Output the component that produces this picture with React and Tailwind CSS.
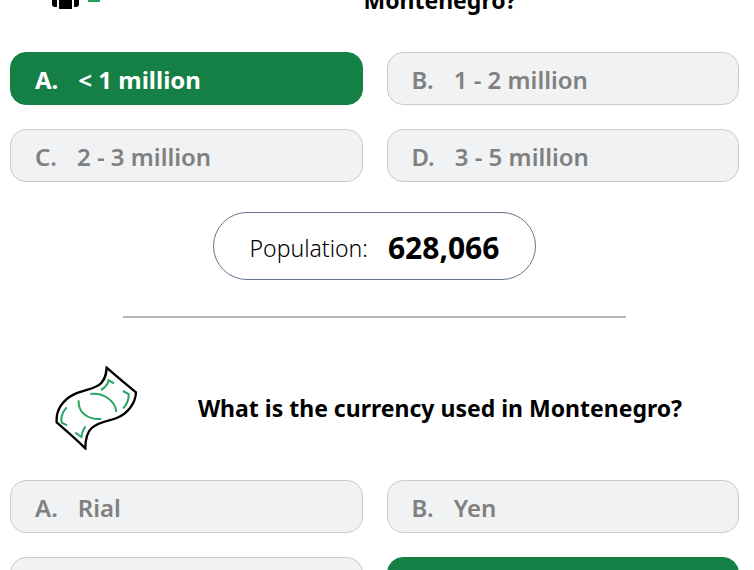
const questions = [
  {
    id: 'population',
    icon: 'people',
    title: 'What is the approximate population of Montenegro?',
    options: ['< 1 million', '1 - 2 million', '2 - 3 million', '3 - 5 million'],
    answer: 0,
  },
  {
    id: 'currency',
    icon: 'money',
    title: 'What is the currency used in Montenegro?',
    options: ['Rial', 'Yen', 'Peso', 'Euro'],
    answer: 3,
  },
];

const letters = ['A', 'B', 'C', 'D'];

function PeopleIcon() {
  return (
    <svg className="w-21 h-21 overflow-visible" viewBox="0 0 84 84" fill="none" aria-hidden="true">
      <path d="M-2 50H3V69H1Q-2 69-2 66Z" fill="#000" />
      <path d="M5 50H18V71H5Z" fill="#000" />
      <path d="M20 50H25V66Q25 69 22 69H20Z" fill="#000" />
      <path d="M34 63H46" stroke="#24a35f" strokeWidth="2" />
    </svg>
  );
}

function MoneyIcon() {
  return (
    <svg className="w-21 h-21" viewBox="42 48 252 252" fill="none" aria-hidden="true">
      <path
        d="M200 53C231 80 258 103 288 127C287 160 262 192 230 204C203 214 176 215 155 234C138 250 136 272 136 295C108 267 79 242 50 217C47 180 69 149 102 133C132 119 168 117 184 99C198 83 199 68 200 53Z"
        stroke="#000"
        strokeWidth="7"
      />
      <g stroke="#28a563" strokeWidth="6">
        <path d="M151 132C190 128 225 150 229 186" />
        <path d="M116 151C113 184 141 210 184 207" />
        <path d="M222 100L206 91C203 104 194 114 183 120" />
        <path d="M249 123L266 132C267 149 260 164 249 175" />
        <path d="M80 172C66 188 62 204 65 218L81 226" />
        <path d="M136 229C129 239 125 249 124 261L106 248" />
      </g>
    </svg>
  );
}

function Question({ question, children }) {
  return (
    <section>
      <div className="flex items-center pr-10">
        <div className="w-[171px] shrink-0 flex justify-center">
          {question.icon === 'money' ? <MoneyIcon /> : <PeopleIcon />}
        </div>
        <h2 className="flex-1 text-center text-[23px] leading-10 font-bold text-black">{question.title}</h2>
      </div>

      {/* Answer options */}
      <div className="grid grid-cols-2 gap-6 mt-[30px]">
        {question.options.map((option, i) => (
          <button
            key={option}
            type="button"
            className={
              i === question.answer
                ? 'flex items-center gap-5 h-[53px] px-6 pt-0.5 rounded-2xl border border-[#158045] bg-[#158045] text-white text-2xl font-bold text-left'
                : 'flex items-center gap-5 h-[53px] px-6 pt-0.5 rounded-2xl border border-[#c9cbcf] bg-[#f1f2f4] text-[#808080] text-2xl font-semibold text-left'
            }
          >
            <span>{letters[i]}.</span>
            <span>{option}</span>
          </button>
        ))}
      </div>
      {children}
    </section>
  );
}

export default function App() {
  return (
    <div className="h-screen overflow-hidden bg-white font-['Noto_Sans','Open_Sans',sans-serif]">
      <main className="-mt-[62px] pl-[10px] pr-[15px]">
        <Question question={questions[0]}>
          <div className="flex justify-center mt-[30px]">
            <p className="flex items-center gap-5 h-[68px] px-9 pt-1 rounded-full border border-[#66758a] text-black">
              <span className="text-[23px] font-light">Population:</span>
              <span className="text-3xl font-bold">628,066</span>
            </p>
          </div>
        </Question>
        <hr className="w-[69%] mx-auto mt-9 mb-12 border-t-2 border-[#b5b5b5]" />
        <Question question={questions[1]} />
      </main>
    </div>
  );
}
